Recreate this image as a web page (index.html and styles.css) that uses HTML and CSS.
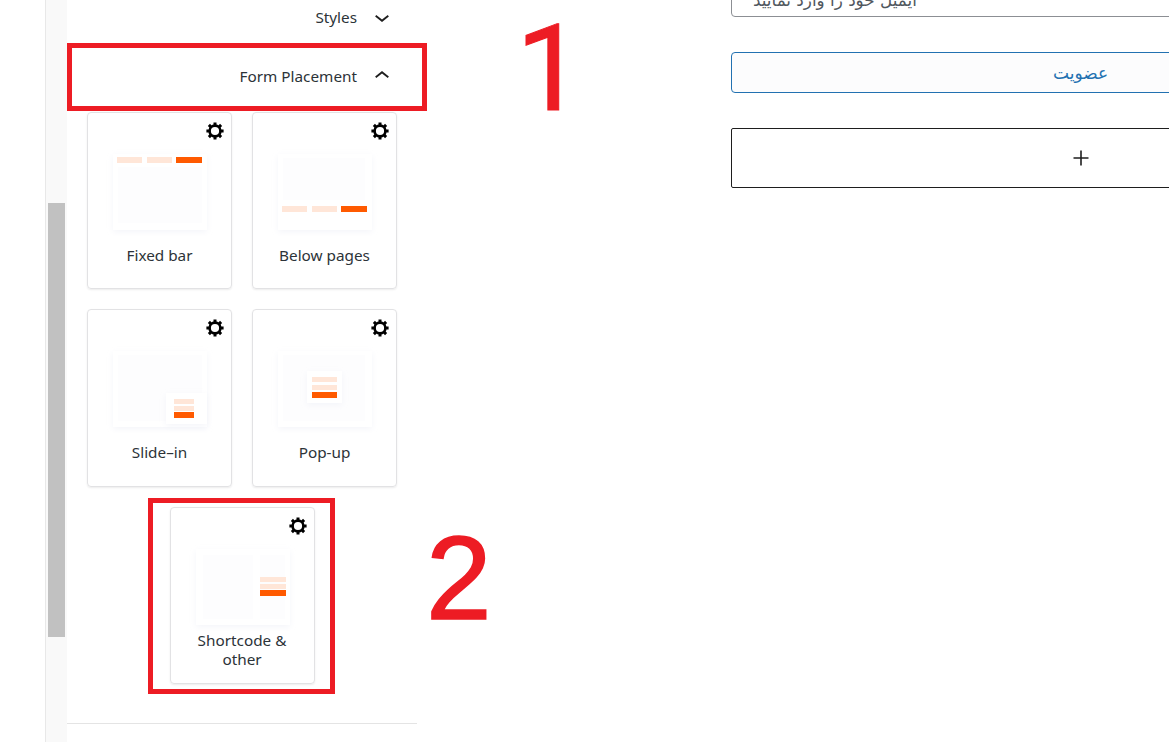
FILE: index.html
```html
<!DOCTYPE html>
<html lang="en">
<head>
    <meta charset="UTF-8">
    <meta name="viewport" content="width=device-width, initial-scale=1.0">
    <title>Form Placement</title>
    <link rel="stylesheet" href="styles.css">
</head>
<body>
    <svg class="defs" width="0" height="0">
        <defs>
            <g id="gear">
                <circle cx="9" cy="9" r="5.4" fill="none" stroke="#000" stroke-width="2.6"/>
                <g stroke="#000" stroke-width="3">
                    <path d="M9 0.4V3.6M9 14.4V17.6M0.4 9H3.6M14.4 9H17.6"/>
                    <path d="M2.9 2.9L5.2 5.2M12.8 12.8L15.1 15.1M2.9 15.1L5.2 12.8M12.8 5.2L15.1 2.9"/>
                </g>
            </g>
            <filter id="soft" x="-20%" y="-20%" width="140%" height="140%">
                <feDropShadow dx="0" dy="2" stdDeviation="3" flood-color="#e4e6f2" flood-opacity="0.4"/>
            </filter>
        </defs>
    </svg>

    <div class="page">
        <div class="gutter"></div>
        <div class="scrollbar"><div class="thumb"></div></div>

        <div class="panel">
            <div class="panel-row">
                <span>Styles</span>
                <svg class="chevron" viewBox="0 0 24 24"><path d="M17.5 11.6L12 16l-5.5-4.4.9-1.2L12 14l4.6-3.6.9 1.2z"/></svg>
            </div>
            <div class="panel-row">
                <span>Form Placement</span>
                <svg class="chevron" viewBox="0 0 24 24"><path d="M6.5 12.4L12 8l5.5 4.4-.9 1.2L12 10l-4.6 3.6-.9-1.2z"/></svg>
            </div>

            <div class="cards">
                <div class="card">
                    <svg class="gear" viewBox="0 0 18 18"><use href="#gear"/></svg>
                    <svg class="thumb-pic" viewBox="0 0 108 88">
                        <rect x="8" y="6" width="94" height="76" fill="#fff" filter="url(#soft)"/>
                        <rect x="13" y="19" width="84" height="56" fill="#fdfdfe"/>
                        <rect x="12" y="9" width="25" height="6" fill="#ffe6d8"/>
                        <rect x="42" y="9" width="25" height="6" fill="#ffe6d8"/>
                        <rect x="71" y="9" width="26" height="6" fill="#ff5a00"/>
                    </svg>
                    <div class="card-label">Fixed bar</div>
                </div>
                <div class="card">
                    <svg class="gear" viewBox="0 0 18 18"><use href="#gear"/></svg>
                    <svg class="thumb-pic" viewBox="0 0 108 88">
                        <rect x="8" y="6" width="94" height="76" fill="#fff" filter="url(#soft)"/>
                        <rect x="13" y="10" width="82" height="42" fill="#fdfdfe"/>
                        <rect x="12" y="58" width="25" height="6" fill="#ffe6d8"/>
                        <rect x="42" y="58" width="25" height="6" fill="#ffe6d8"/>
                        <rect x="71" y="58" width="26" height="6" fill="#ff5a00"/>
                    </svg>
                    <div class="card-label">Below pages</div>
                </div>
                <div class="card">
                    <svg class="gear" viewBox="0 0 18 18"><use href="#gear"/></svg>
                    <svg class="thumb-pic" viewBox="0 0 108 88">
                        <rect x="8" y="6" width="94" height="76" fill="#fff" filter="url(#soft)"/>
                        <rect x="13" y="10" width="84" height="66" fill="#fdfdfe"/>
                        <rect x="61" y="48" width="41" height="31" fill="#fff" filter="url(#soft)"/>
                        <rect x="69" y="54" width="20" height="5" fill="#ffe6d8"/>
                        <rect x="69" y="61" width="20" height="5" fill="#ffe6d8"/>
                        <rect x="69" y="67" width="20" height="6" fill="#ff5a00"/>
                    </svg>
                    <div class="card-label">Slide–in</div>
                </div>
                <div class="card">
                    <svg class="gear" viewBox="0 0 18 18"><use href="#gear"/></svg>
                    <svg class="thumb-pic" viewBox="0 0 108 88">
                        <rect x="8" y="6" width="94" height="76" fill="#fff" filter="url(#soft)"/>
                        <rect x="13" y="10" width="82" height="66" fill="#fdfdfe"/>
                        <rect x="37" y="26" width="35" height="32" fill="#fff" filter="url(#soft)"/>
                        <rect x="42" y="32" width="25" height="5" fill="#ffe6d8"/>
                        <rect x="42" y="40" width="25" height="5" fill="#ffe6d8"/>
                        <rect x="42" y="47" width="25" height="6" fill="#ff5a00"/>
                    </svg>
                    <div class="card-label">Pop-up</div>
                </div>
                <div class="card">
                    <svg class="gear" viewBox="0 0 18 18"><use href="#gear"/></svg>
                    <svg class="thumb-pic" viewBox="0 0 108 88">
                        <rect x="8" y="6" width="94" height="76" fill="#fff" filter="url(#soft)"/>
                        <rect x="15" y="12" width="50" height="64" fill="#fdfdfe"/>
                        <rect x="72" y="12" width="25" height="64" fill="#fdfdfe"/>
                        <rect x="72" y="34" width="26" height="5" fill="#ffe6d8"/>
                        <rect x="72" y="41" width="26" height="5" fill="#ffe6d8"/>
                        <rect x="72" y="47" width="26" height="6" fill="#ff5a00"/>
                    </svg>
                    <div class="card-label">Shortcode &amp; other</div>
                </div>
            </div>

            <div class="panel-end"></div>
        </div>

        <div class="content">
            <div class="field">ایمیل خود را وارد نمایید</div>
            <div class="submit" dir="rtl">عضویت</div>
            <div class="appender">
                <svg class="plus" viewBox="0 0 16 16"><path d="M8 0.5V15.5M0.5 8H15.5"/></svg>
            </div>
        </div>
    </div>

    <!-- annotations drawn over the screenshot -->
    <div class="mark mark-one"></div>
    <div class="mark mark-two"></div>
    <div class="num num-one">1</div>
    <div class="num num-two">2</div>
</body>
</html>
```

FILE: styles.css
```css
html, body {
    margin: 0;
    height: 100%;
    overflow: hidden;
    background-color: #fff;
}
body {
    position: relative;
    font-family: "Noto Sans", "DejaVu Sans", sans-serif;
    font-size: 15.3px;
    color: #2c3338;
}
.defs {
    position: absolute;
}
.page {
    display: flex;
    height: 742px;
}
.gutter {
    width: 45px;
    flex: none;
}
.scrollbar {
    width: 22px;
    flex: none;
    padding: 203px 2px 0 2px;
    box-sizing: border-box;
    background-color: #f9f9f9;
    border-left: 1px solid #e8e8e8;
}
.thumb {
    height: 434px;
    background-color: #c1c1c1;
}
.panel {
    width: 350px;
    flex: none;
    margin-top: -12.5px;
}
.panel-row {
    display: flex;
    justify-content: flex-end;
    align-items: center;
    gap: 10px;
    height: 59px;
    padding-right: 20px;
}
.chevron {
    width: 30px;
    height: 30px;
    fill: #1e1e1e;
}
.cards {
    display: flex;
    flex-wrap: wrap;
    justify-content: center;
    gap: 20px;
    width: 310px;
    margin: 6.4px 0 0 20px;
}
.card {
    position: relative;
    width: 145px;
    height: 177.5px;
    box-sizing: border-box;
    padding-top: 35px;
    border: 1px solid #e2e2e4;
    border-radius: 4px;
    box-shadow: 0 1px 2px rgba(0, 0, 0, 0.08);
    text-align: center;
}
.gear {
    position: absolute;
    top: 9px;
    right: 7px;
    width: 18px;
    height: 18px;
}
.thumb-pic {
    display: block;
    width: 108px;
    height: 88px;
    margin-left: 17px;
}
.card-label {
    display: flex;
    align-items: center;
    justify-content: center;
    height: 39px;
    padding: 0 20px;
    line-height: 19px;
}
.panel-end {
    height: 1px;
    margin-top: 39px;
    background-color: #e4e4e4;
}
.content {
    width: 699px;
    flex: none;
    margin: -24px 0 0 314px;
    display: flex;
    flex-direction: column;
    gap: 35px;
}
.field {
    height: 41px;
    box-sizing: border-box;
    padding: 11px 21px 0;
    border: 1px solid #8c8f94;
    border-radius: 4px;
    color: #50575e;
    font-family: "DejaVu Sans", sans-serif;
    font-size: 16.8px;
    line-height: 24px;
}
.submit {
    height: 41px;
    box-sizing: border-box;
    border: 1px solid #2271b1;
    border-radius: 4px;
    background-color: #fcfcfd;
    color: #2271b1;
    font-family: "DejaVu Sans", sans-serif;
    font-size: 17px;
    line-height: 41px;
    text-align: center;
}
.appender {
    display: flex;
    align-items: center;
    justify-content: center;
    height: 60px;
    box-sizing: border-box;
    border: 1px solid #1e1e1e;
    border-radius: 2px;
}
.plus {
    width: 16px;
    height: 16px;
    fill: none;
    stroke: #1e1e1e;
    stroke-width: 1.6;
}
.mark {
    position: absolute;
    box-sizing: border-box;
    border: 5px solid #ed1c24;
}
.mark-one {
    left: 67px;
    top: 43px;
    width: 360px;
    height: 68px;
}
.mark-two {
    left: 148px;
    top: 498px;
    width: 187px;
    height: 196px;
}
.num {
    position: absolute;
    color: #ed1c24;
    line-height: 1;
}
.num-one {
    left: 516px;
    top: 9px;
    font-family: Roboto, sans-serif;
    font-size: 120px;
    -webkit-text-stroke: 1px #ed1c24;
}
.num-two {
    left: 426px;
    top: 519px;
    font-family: "Liberation Sans", sans-serif;
    font-size: 118px;
    -webkit-text-stroke: 1.5px #ed1c24;
}
```
